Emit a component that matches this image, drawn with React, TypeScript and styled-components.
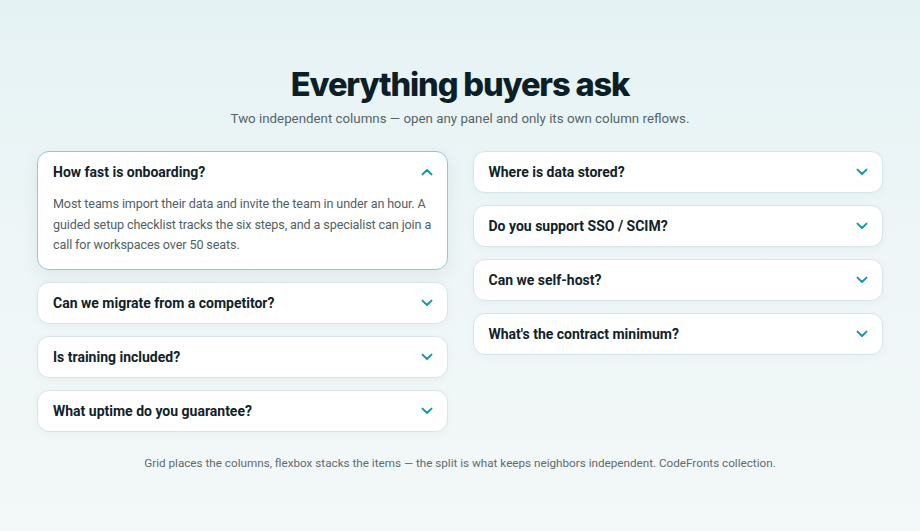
import React, { useState } from "react";
import styled, { createGlobalStyle } from "styled-components";

const GlobalStyle = createGlobalStyle`
  html, body {
    margin: 0;
    padding: 0;
  }
  body {
    font-family: Roboto, Inter, "Liberation Sans", sans-serif;
    background: linear-gradient(180deg, #e5f2f4 0%, #eef6f7 45%, #f3f8f8 100%);
    min-height: 100vh;
    color: #0f2229;
  }
`;

interface IFaqItem {
  id: number;
  question: string;
  answer: string;
}

const leftItems: IFaqItem[] = [
  {
    id: 1,
    question: "How fast is onboarding?",
    answer:
      "Most teams import their data and invite the team in under an hour. A guided setup checklist tracks the six steps, and a specialist can join a call for workspaces over 50 seats.",
  },
  { id: 2, question: "Can we migrate from a competitor?", answer: "" },
  { id: 3, question: "Is training included?", answer: "" },
  { id: 4, question: "What uptime do you guarantee?", answer: "" },
];

const rightItems: IFaqItem[] = [
  { id: 5, question: "Where is data stored?", answer: "" },
  { id: 6, question: "Do you support SSO / SCIM?", answer: "" },
  { id: 7, question: "Can we self-host?", answer: "" },
  { id: 8, question: "What's the contract minimum?", answer: "" },
];

const Chevron: React.FC<{ open: boolean }> = ({ open }) => (
  <ChevronIcon open={open} width="12" height="8" viewBox="0 0 12 8" aria-hidden>
    <path
      d="M1.5 1.6 L6 6 L10.5 1.6"
      fill="none"
      stroke="#1796ab"
      strokeWidth="2"
      strokeLinecap="round"
      strokeLinejoin="round"
    />
  </ChevronIcon>
);

const FaqColumn: React.FC<{ items: IFaqItem[]; initialOpen?: number }> = ({
  items,
  initialOpen,
}) => {
  const [openId, setOpenId] = useState<number | undefined>(initialOpen);

  return (
    <Column>
      {items.map((item) => {
        const open = item.id === openId;
        return (
          <Card key={item.id} open={open}>
            <Question
              type="button"
              onClick={() => setOpenId(open ? undefined : item.id)}
            >
              <span>{item.question}</span>
              <Chevron open={open} />
            </Question>
            {open && <Answer>{item.answer}</Answer>}
          </Card>
        );
      })}
    </Column>
  );
};

const App: React.FC = () => {
  return (
    <>
      <GlobalStyle />
      <Page>
        <Header>
          <Title>Everything buyers ask</Title>
          <Subtitle>
            Two independent columns — open any panel and only its own column reflows.
          </Subtitle>
        </Header>
        <Grid>
          <FaqColumn items={leftItems} initialOpen={1} />
          <FaqColumn items={rightItems} />
        </Grid>
        <Footer>
          Grid places the columns, flexbox stacks the items — the split is what keeps
          neighbors independent. CodeFronts collection.
        </Footer>
      </Page>
    </>
  );
};

const Page = styled.main`
  width: 846px;
  margin: 0 auto;
  padding: 64px 0 40px;
  display: flex;
  flex-direction: column;
  align-items: stretch;
`;

const Header = styled.header`
  display: flex;
  flex-direction: column;
  align-items: center;
  gap: 5px;
  margin-bottom: 22px;
`;

const Title = styled.h1`
  margin: 0;
  font-family: Inter, Roboto, sans-serif;
  font-size: 32.6px;
  line-height: 40px;
  font-weight: 800;
  letter-spacing: -0.035em;
  color: #0d1f26;
`;

const Subtitle = styled.p`
  margin: 0;
  font-size: 13.3px;
  line-height: 20px;
  color: #56646a;
`;

const Grid = styled.div`
  display: grid;
  grid-template-columns: 1fr 1fr;
  gap: 25px;
  align-items: start;
`;

const Column = styled.div`
  display: flex;
  flex-direction: column;
  gap: 12px;
`;

const Card = styled.div<{ open: boolean }>`
  background: #ffffff;
  border: 1px solid ${(p) => (p.open ? "#93c8d0" : "#d7e5e8")};
  border-radius: 12px;
  box-shadow: ${(p) =>
    p.open
      ? "0 6px 18px rgba(20, 70, 80, 0.08)"
      : "0 2px 8px rgba(20, 70, 80, 0.04)"};
  overflow: hidden;
`;

const Question = styled.button`
  width: 100%;
  height: 40px;
  padding: 0 14px 0 15px;
  display: flex;
  align-items: center;
  justify-content: space-between;
  background: none;
  border: 0;
  cursor: pointer;
  font-family: inherit;
  font-size: 14px;
  font-weight: 700;
  color: #0f2229;
  text-align: left;
`;

const ChevronIcon = styled.svg<{ open: boolean }>`
  flex-shrink: 0;
  transform: ${(p) => (p.open ? "rotate(180deg)" : "none")};
`;

const Answer = styled.p`
  margin: 0;
  padding: 2px 14px 13px 15px;
  font-size: 12.6px;
  line-height: 20.5px;
  letter-spacing: -0.12px;
  color: #515f65;
`;

const Footer = styled.p`
  margin: 23px 0 0;
  text-align: center;
  font-size: 11.7px;
  line-height: 16px;
  color: #5e6b70;
`;

export default App;
